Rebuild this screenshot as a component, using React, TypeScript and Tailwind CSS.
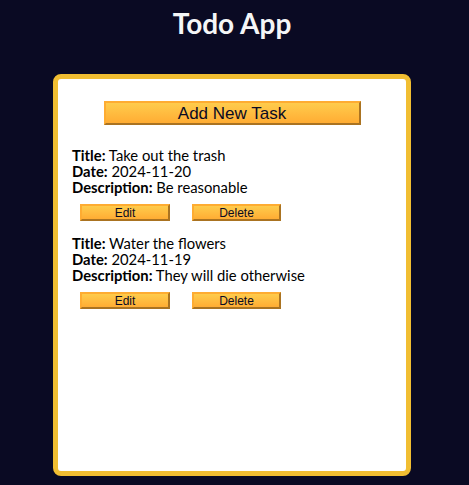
import React from "react";

const tasks = [
  { title: "Take out the trash", date: "2024-11-20", description: "Be reasonable" },
  { title: "Water the flowers", date: "2024-11-19", description: "They will die otherwise" },
];

const btn =
  "cursor-pointer text-[#0a0a23] bg-[#feac32] bg-gradient-to-b from-[#fecc4c] to-[#ffac33] border-2 [border-style:outset] border-[#feac32] font-['Liberation_Sans',Arial,sans-serif] leading-none";

export default function App() {
  return (
    <div className="min-h-[485px] w-full bg-[#0a0a23] font-['Lato','Trebuchet_MS',sans-serif]">
      <main className="flex flex-col items-center pr-[5px]">
        <h1 className="mt-[6px] h-[34px] text-[28px] leading-[34px] font-bold text-[#f5f6f7]">Todo App</h1>
        <div className="mt-[34px] w-[358px] h-[402px] bg-white border-[5px] border-[#f1be32] rounded-[8px] flex flex-col pt-[22px] px-[14px]">
          <button className={`${btn} self-center w-[257px] h-[24px] text-[17px]`}>Add New Task</button>
          <div className="mt-[22px] flex flex-col">
            {tasks.map((t, i) => (
              <div key={i} className={i > 0 ? "mt-[14px]" : ""}>
                <p className="text-[14.8px] leading-[16px] text-black">
                  <strong>Title:</strong> {t.title}
                </p>
                <p className="text-[14.8px] leading-[16px] text-black">
                  <strong>Date:</strong> {t.date}
                </p>
                <p className="text-[14.8px] leading-[16px] text-black">
                  <strong>Description:</strong> {t.description}
                </p>
                <div className="mt-[9px] flex gap-[22px] pl-[8px]">
                  <button className={`${btn} w-[90px] h-[17px] text-[12px]`}>Edit</button>
                  <button className={`${btn} w-[89px] h-[17px] text-[12px]`}>Delete</button>
                </div>
              </div>
            ))}
          </div>
        </div>
      </main>
    </div>
  );
}
